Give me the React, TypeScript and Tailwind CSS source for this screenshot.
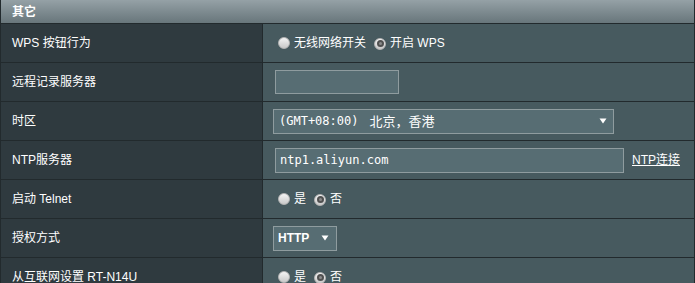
import React from "react";

const sans = { fontFamily: '"Liberation Sans", Arial, "Noto Sans CJK SC", sans-serif' };
const mono = { fontFamily: '"DejaVu Sans Mono", "Liberation Mono", "Noto Sans CJK SC", monospace' };
const cjk = { fontFamily: '"Noto Sans CJK SC", sans-serif' };

function Radio({ checked }: { checked?: boolean }) {
  return (
    <span className="relative inline-flex w-[12px] h-[12px] rounded-full bg-gradient-to-b from-[#f4f4f4] to-[#c9c9c9] border border-[#b5b5b5] items-center justify-center shrink-0">
      {checked && (
        <span className="w-[7px] h-[7px] rounded-full bg-[#8a8a8a] border-[2px] border-[#505050]" />
      )}
    </span>
  );
}

function Arrow() {
  return (
    <svg width="8" height="6" viewBox="0 0 8 6">
      <polygon points="0.5,0.5 7.5,0.5 4,5.5" fill="#ffffff" />
    </svg>
  );
}

function Row({ label, children }: { label: string; children?: React.ReactNode }) {
  return (
    <div className="flex h-[39px] border-b border-[#222a2d]">
      <div className="w-[262px] shrink-0 bg-[#2f3a3f] border-r border-[#222a2d] flex items-center pl-[11px] text-[12px] text-white" style={sans}>
        {label}
      </div>
      <div className="flex-1 bg-[#475a5f] flex items-center text-[12px] text-white" style={sans}>
        {children}
      </div>
    </div>
  );
}

export default function App() {
  return (
    <div className="w-[695px] h-[283px] overflow-hidden bg-[#475a5f]">
      <div className="border-x border-[#222a2d]">
        <div className="h-[24px] border-b border-[#222a2d] bg-gradient-to-b from-[#95a1a6] to-[#68767b] flex items-center pl-[11px] text-[12px] font-bold text-white" style={sans}>
          其它
        </div>
        <Row label="WPS 按钮行为">
          <div className="flex items-center pl-[15px]">
            <Radio />
            <span className="ml-[4px]">无线网络开关</span>
            <span className="ml-[8px]"><Radio checked /></span>
            <span className="ml-[4px]">开启 WPS</span>
          </div>
        </Row>
        <Row label="远程记录服务器">
          <div className="ml-[12px] w-[124px] h-[24px] bg-[#576d73] border border-[#8f9c9f]" />
        </Row>
        <Row label="时区">
          <div className="ml-[10px] w-[341px] h-[25px] bg-[#576d73] border border-[#8f9c9f] flex items-center justify-between pl-[5px] pr-[6px] text-[12px] text-white">
            <span className="flex items-center">
              <span style={mono}>(GMT+08:00)</span>
              <span className="ml-[11px] text-[13px]" style={cjk}>北京，香港</span>
            </span>
            <Arrow />
          </div>
        </Row>
        <Row label="NTP服务器">
          <div className="ml-[12px] w-[349px] h-[25px] bg-[#576d73] border border-[#8f9c9f] flex items-center pl-[4px] text-[12px] text-white" style={mono}>
            ntp1.aliyun.com
          </div>
          <span className="ml-[8px] underline text-white">NTP连接</span>
        </Row>
        <Row label="启动 Telnet">
          <div className="flex items-center pl-[15px]">
            <Radio />
            <span className="ml-[4px]">是</span>
            <span className="ml-[8px]"><Radio checked /></span>
            <span className="ml-[4px]">否</span>
          </div>
        </Row>
        <Row label="授权方式">
          <div className="ml-[10px] w-[64px] h-[25px] bg-[#576d73] border border-[#8f9c9f] flex items-center justify-between pl-[4px] pr-[7px] text-[12px] font-bold text-white">
            <span>HTTP</span>
            <Arrow />
          </div>
        </Row>
        <Row label="从互联网设置 RT-N14U">
          <div className="flex items-center pl-[15px]">
            <Radio />
            <span className="ml-[4px]">是</span>
            <span className="ml-[8px]"><Radio checked /></span>
            <span className="ml-[4px]">否</span>
          </div>
        </Row>
      </div>
    </div>
  );
}
